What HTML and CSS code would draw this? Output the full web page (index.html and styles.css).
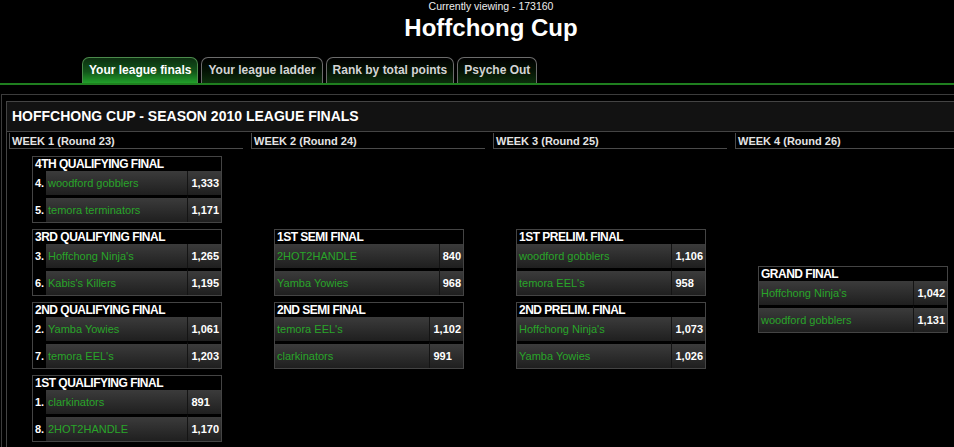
FILE: index.html
```html
<!DOCTYPE html>
<html lang="en">
<head>
  <meta charset="UTF-8">
  <meta name="viewport" content="width=device-width, initial-scale=1.0">
  <title>Hoffchong Cup - League Finals</title>
  <link rel="stylesheet" href="styles.css">
</head>
<body>
  <div class="header">
    <div class="viewing">Currently viewing - 173160</div>
    <h1>Hoffchong Cup</h1>
  </div>

  <div class="tabs">
    <a class="tab active" href="#">Your league finals</a>
    <a class="tab" href="#">Your league ladder</a>
    <a class="tab" href="#">Rank by total points</a>
    <a class="tab" href="#">Psyche Out</a>
  </div>

  <div class="board">
    <div class="panel">
      <div class="panel-title">HOFFCHONG CUP - SEASON 2010 LEAGUE FINALS</div>

      <div class="bracket">
        <div class="week">WEEK 1 (Round 23)</div>
        <div class="week">WEEK 2 (Round 24)</div>
        <div class="week">WEEK 3 (Round 25)</div>
        <div class="week">WEEK 4 (Round 26)</div>

        <!-- week 1 -->
        <div class="round">
          <table class="match">
            <tr><th colspan="3">4TH QUALIFYING FINAL</th></tr>
            <tr><td class="seed">4.</td><td class="team">woodford gobblers</td><td class="score">1,333</td></tr>
            <tr><td class="seed">5.</td><td class="team">temora terminators</td><td class="score">1,171</td></tr>
          </table>
          <table class="match">
            <tr><th colspan="3">3RD QUALIFYING FINAL</th></tr>
            <tr><td class="seed">3.</td><td class="team">Hoffchong Ninja's</td><td class="score">1,265</td></tr>
            <tr><td class="seed">6.</td><td class="team">Kabis's Killers</td><td class="score">1,195</td></tr>
          </table>
          <table class="match">
            <tr><th colspan="3">2ND QUALIFYING FINAL</th></tr>
            <tr><td class="seed">2.</td><td class="team">Yamba Yowies</td><td class="score">1,061</td></tr>
            <tr><td class="seed">7.</td><td class="team">temora EEL's</td><td class="score">1,203</td></tr>
          </table>
          <table class="match">
            <tr><th colspan="3">1ST QUALIFYING FINAL</th></tr>
            <tr><td class="seed">1.</td><td class="team">clarkinators</td><td class="score">891</td></tr>
            <tr><td class="seed">8.</td><td class="team">2HOT2HANDLE</td><td class="score">1,170</td></tr>
          </table>
        </div>

        <!-- week 2 -->
        <div class="round">
          <table class="match">
            <tr><th colspan="2">1ST SEMI FINAL</th></tr>
            <tr><td class="team">2HOT2HANDLE</td><td class="score">840</td></tr>
            <tr><td class="team">Yamba Yowies</td><td class="score">968</td></tr>
          </table>
          <table class="match">
            <tr><th colspan="2">2ND SEMI FINAL</th></tr>
            <tr><td class="team">temora EEL's</td><td class="score">1,102</td></tr>
            <tr><td class="team">clarkinators</td><td class="score">991</td></tr>
          </table>
        </div>

        <!-- week 3 -->
        <div class="round">
          <table class="match">
            <tr><th colspan="2">1ST PRELIM. FINAL</th></tr>
            <tr><td class="team">woodford gobblers</td><td class="score">1,106</td></tr>
            <tr><td class="team">temora EEL's</td><td class="score">958</td></tr>
          </table>
          <table class="match">
            <tr><th colspan="2">2ND PRELIM. FINAL</th></tr>
            <tr><td class="team">Hoffchong Ninja's</td><td class="score">1,073</td></tr>
            <tr><td class="team">Yamba Yowies</td><td class="score">1,026</td></tr>
          </table>
        </div>

        <!-- week 4 -->
        <div class="round">
          <table class="match">
            <tr><th colspan="2">GRAND FINAL</th></tr>
            <tr><td class="team">Hoffchong Ninja's</td><td class="score">1,042</td></tr>
            <tr><td class="team">woodford gobblers</td><td class="score">1,131</td></tr>
          </table>
        </div>
      </div>
    </div>
  </div>
</body>
</html>
```

FILE: styles.css
```css
/* page */
html, body {
  overflow: hidden;
}

body {
  margin: 0;
  min-width: 982px;
  background: #000;
  color: #fff;
  font-family: "Liberation Sans", Arial, sans-serif;
}

.header {
  text-align: center;
}

.viewing {
  font-size: 10.5px;
  line-height: 13px;
  color: #eee;
}

h1 {
  margin: 0;
  font-size: 24px;
  line-height: 30px;
  font-weight: bold;
}

/* tabs */
.tabs {
  display: flex;
  gap: 3px;
  margin-top: 14px;
  padding-left: 82px;
  border-bottom: 2px solid #1f7f1f;
}

.tab {
  display: block;
  box-sizing: border-box;
  height: 26px;
  padding: 0 6px;
  line-height: 24px;
  font-size: 12px;
  font-weight: bold;
  color: #d4d4d4;
  text-decoration: none;
  border: 1px solid #6c6c6c;
  border-bottom: none;
  border-radius: 7px 7px 0 0;
  background: linear-gradient(#000 0%, #041204 50%, #0c2e0c 100%);
}

.tab.active {
  color: #fff;
  border-color: #4c8a4c;
  background: linear-gradient(#0c2e10 0%, #12561a 55%, #21a02a 100%);
}

/* board */
.board {
  margin: 9px 0 0 1px;
  padding: 6px 0 0 4px;
  border-top: 1px solid #3c3c3c;
  border-left: 1px solid #3c3c3c;
}

.panel {
  width: 1000px;
  border: 1px solid #444;
}

.panel-title {
  height: 29px;
  line-height: 29px;
  padding: 0 5px;
  font-size: 14px;
  font-weight: bold;
  background: #121212;
  border-bottom: 1px solid #444;
}

.bracket {
  display: grid;
  grid-template-columns: repeat(4, 242px);
  padding: 1px 0 0 2px;
}

.week {
  margin-right: 8px;
  padding: 1px 0 0 2px;
  line-height: 14px;
  font-size: 11px;
  font-weight: bold;
  color: #e4e4e4;
  border-left: 1px solid #4a4a4a;
  border-bottom: 1px solid #4a4a4a;
}

.round {
  display: flex;
  flex-direction: column;
  justify-content: center;
  gap: 6px;
  padding: 7px 0 8px 23px;
}

/* match boxes */
.match {
  width: 190px;
  border: 1px solid #444;
  border-collapse: separate;
  border-spacing: 0;
  background: #000;
}

.match th {
  height: 14px;
  padding: 0 0 0 2px;
  line-height: 14px;
  text-align: left;
  font-size: 12px;
  font-weight: bold;
  letter-spacing: -0.5px;
  white-space: nowrap;
}

.match td {
  height: 24px;
  padding: 0;
  font-size: 11px;
  white-space: nowrap;
}

.match tr + tr + tr td {
  border-top: 3px solid #000;
}

.match .seed {
  width: 11px;
  padding-left: 2px;
  font-weight: bold;
  background: #000;
}

.match .team {
  padding-left: 2px;
  color: #29a529;
  background: linear-gradient(#3b3b3b, #1f1f1f);
}

.match .score {
  width: 1%;
  padding: 0 2px 0 3px;
  font-weight: bold;
  border-left: 1px solid #141414;
  background: linear-gradient(#3b3b3b, #1f1f1f);
}
```
